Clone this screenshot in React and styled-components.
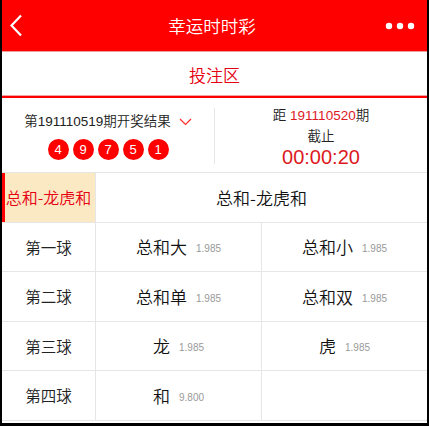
import React from 'react';
import styled, { createGlobalStyle } from 'styled-components';

const GlobalStyle = createGlobalStyle`
  html, body {
    margin: 0;
    padding: 0;
    height: 426px;
    overflow: hidden;
    background: #000;
  }
  body {
    font-family: "Liberation Sans", "Noto Sans CJK SC", sans-serif;
    font-weight: 350;
  }
`;

const Screen = styled.div`
  width: 425px;
  height: 423px;
  margin-left: 2px;
  background: #fff;
  overflow: hidden;
`;

const Header = styled.div`
  height: 51px;
  background: #ff0000;
  border-bottom: 1px solid #f39a9a;
  display: flex;
  align-items: center;
  justify-content: space-between;
  padding: 0 12px 0 7px;
`;

const Title = styled.div`
  color: #fff;
  font-size: 17.5px;
  font-family: "Noto Sans CJK SC", sans-serif;
`;

const IconBtn = styled.div`
  width: 30px;
  display: flex;
  align-items: center;
  justify-content: ${p => (p.right ? 'flex-end' : 'flex-start')};
`;

const Tab = styled.div`
  height: 44px;
  display: flex;
  align-items: center;
  justify-content: center;
  color: #e60012;
  font-size: 17px;
  font-family: "Noto Sans CJK SC", sans-serif;
  border-bottom: 2px solid #ff0000;
  box-shadow: inset 0 -1px 0 #f4a3a3;
`;

const Info = styled.div`
  height: 73px;
  display: flex;
  border-bottom: 1px solid #e6e6e6;
  margin-top: 1px;
`;

const InfoLeft = styled.div`
  flex: 1;
  display: flex;
  flex-direction: column;
  align-items: center;
  padding-top: 13px;
`;

const Period = styled.div`
  display: flex;
  align-items: center;
  color: #222;
  font-size: 13.5px;
  line-height: 20px;
  svg {
    margin-left: 8px;
  }
`;

const Balls = styled.div`
  display: flex;
  gap: 4px;
  margin-top: 7px;
`;

const Ball = styled.span`
  width: 21px;
  height: 21px;
  border-radius: 50%;
  background: #ff0000;
  color: #fff;
  font-size: 13px;
  display: flex;
  align-items: center;
  justify-content: center;
`;

const Divider = styled.div`
  width: 1px;
  background: #e6e6e6;
  margin: 9px 0 8px;
`;

const InfoRight = styled.div`
  width: 212px;
  display: flex;
  flex-direction: column;
  align-items: center;
  padding-top: 6px;
  color: #222;
  font-size: 13.5px;
  line-height: 21px;
`;

const Red = styled.span`
  color: #dc1a1f;
`;

const Countdown = styled.div`
  color: #dc1a1f;
  font-size: 20px;
  line-height: 21px;
`;

const Row = styled.div`
  display: flex;
  height: 48.5px;
  border-bottom: 1px solid #e6e6e6;
`;

const Label = styled.div`
  width: 93px;
  border-right: 1px solid #e6e6e6;
  display: flex;
  align-items: center;
  justify-content: center;
  font-family: "Noto Sans CJK SC", sans-serif;
  font-size: ${p => (p.active ? '16px' : '15.5px')};
  color: ${p => (p.active ? '#e60012' : '#222')};
  background: ${p => (p.active ? '#fbe9c3' : '#fff')};
  box-shadow: ${p => (p.active ? 'inset 3px 0 0 #ff0000' : 'none')};
`;

const Group = styled.div`
  flex: 1;
  display: flex;
  align-items: center;
  justify-content: center;
  font-family: "Noto Sans CJK SC", sans-serif;
  font-size: 17px;
  color: #111;
`;

const Option = styled.div`
  flex: 1;
  display: flex;
  align-items: center;
  justify-content: center;
  gap: 9px;
  & + & {
    border-left: 1px solid #e6e6e6;
  }
`;

const OptName = styled.span`
  font-family: "Noto Sans CJK SC", sans-serif;
  font-size: 17px;
  color: #111;
`;

const Odds = styled.span`
  font-size: 10px;
  color: #999;
  padding-top: 4px;
`;

const rows = [
  { label: '第一球', opts: [['总和大', '1.985'], ['总和小', '1.985']] },
  { label: '第二球', opts: [['总和单', '1.985'], ['总和双', '1.985']] },
  { label: '第三球', opts: [['龙', '1.985'], ['虎', '1.985']] },
  { label: '第四球', opts: [['和', '9.800'], null] },
];

export default function App() {
  return (
    <Screen>
      <GlobalStyle />
      <Header>
        <IconBtn>
          <svg width="14" height="23" viewBox="0 0 14 23">
            <path d="M12 1.5 L2.5 11.5 L12 21.5" fill="none" stroke="#fff" strokeWidth="2.2" />
          </svg>
        </IconBtn>
        <Title>幸运时时彩</Title>
        <IconBtn right>
          <svg width="30" height="8" viewBox="0 0 30 8">
            <circle cx="4" cy="4" r="3.2" fill="#fff" />
            <circle cx="15" cy="4" r="3.2" fill="#fff" />
            <circle cx="26" cy="4" r="3.2" fill="#fff" />
          </svg>
        </IconBtn>
      </Header>
      <Tab>投注区</Tab>
      <Info>
        <InfoLeft>
          <Period>
            第191110519期开奖结果
            <svg width="13" height="8" viewBox="0 0 13 8">
              <path d="M1 1 L6.5 6.5 L12 1" fill="none" stroke="#ff2a2a" strokeWidth="1.2" />
            </svg>
          </Period>
          <Balls>
            {['4', '9', '7', '5', '1'].map((n, i) => (
              <Ball key={i}>{n}</Ball>
            ))}
          </Balls>
        </InfoLeft>
        <Divider />
        <InfoRight>
          <div>
            距 <Red>191110520</Red>期
          </div>
          <div>截止</div>
          <Countdown>00:00:20</Countdown>
        </InfoRight>
      </Info>
      <Row>
        <Label active>总和-龙虎和</Label>
        <Group>总和-龙虎和</Group>
      </Row>
      {rows.map(r => (
        <Row key={r.label}>
          <Label>{r.label}</Label>
          {r.opts.map((o, i) => (
            <Option key={i}>
              {o && (
                <>
                  <OptName>{o[0]}</OptName>
                  <Odds>{o[1]}</Odds>
                </>
              )}
            </Option>
          ))}
        </Row>
      ))}
    </Screen>
  );
}
